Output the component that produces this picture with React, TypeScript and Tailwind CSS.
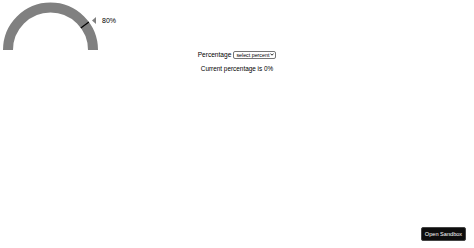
import React from "react";

export default function App() {
  return (
    <div className="relative h-[248px] w-[474px] bg-white font-['Liberation_Sans',Arial,sans-serif] text-black">
      <div className="flex items-start">
        <svg width="120" height="50" viewBox="0 0 120 50" className="block">
          <path
            d="M 8 50 A 42.5 42.5 0 0 1 93 50"
            fill="none"
            stroke="#808080"
            strokeWidth="10"
          />
          <line x1="80.8" y1="28" x2="88.9" y2="22.1" stroke="#000" strokeWidth="1.2" />
          <polygon points="92,20.5 96,17 96,24" fill="#808080" />
          <text x="102" y="23" fontSize="7" fill="#000" fontFamily="Liberation Sans, Arial, sans-serif">80%</text>
        </svg>
      </div>
      <div className="flex flex-col items-center">
        <div className="flex items-center gap-[2px] text-[6.6px] leading-[9px]">
          <span>Percentage</span>
          <span className="flex h-[8px] items-center gap-[1px] rounded-[2px] border-[0.5px] border-[#767676] bg-white pl-[2px] pr-[1px] text-[5.3px] leading-[8px]">
            <span>select percent</span>
            <svg width="4" height="3" viewBox="0 0 4 3"><path d="M0.5 0.6 L2 2.2 L3.5 0.6" fill="none" stroke="#000" strokeWidth="0.8" /></svg>
          </span>
        </div>
        <div className="mt-[5px] text-[6.4px] leading-[9px]">Current percentage is 0%</div>
      </div>
      <div className="absolute bottom-[7px] right-[8px] flex h-[14px] w-[45px] items-center justify-center rounded-[2px] border-[0.5px] border-[#444] bg-[#0d0d0d] text-[5.6px] text-white">
        Open Sandbox
      </div>
    </div>
  );
}
